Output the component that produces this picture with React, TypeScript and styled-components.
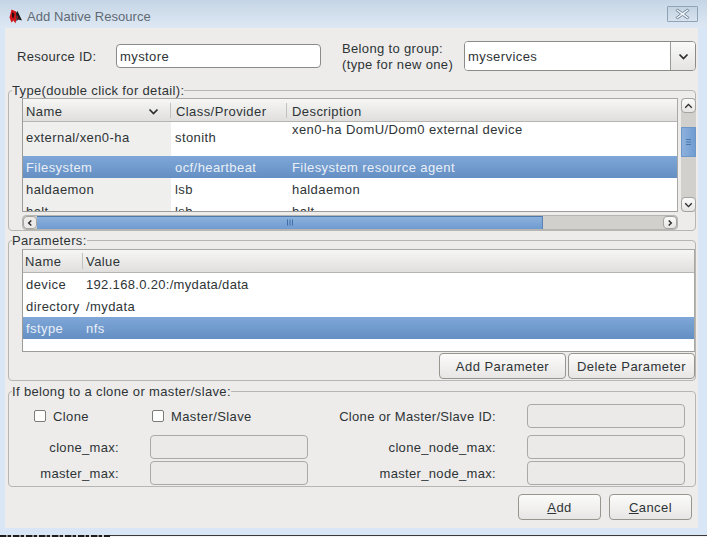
import React from "react";
import styled, { createGlobalStyle } from "styled-components";

const Global = createGlobalStyle`
  html, body { margin: 0; padding: 0; background: #d8e6f5; }
  body { font-family: "Liberation Sans", Arial, sans-serif; font-size: 13px; color: #2e3436; }
`;

const Win = styled.div`
  width: 707px; height: 537px; display: flex; flex-direction: column; overflow: hidden;
  background: #d8e6f5; position: relative;
`;
const TitleBar = styled.header`
  height: 28px; flex: none; display: flex; align-items: center; padding: 4px 9px 0 9px; box-sizing: border-box;
  background: linear-gradient(#c6d5e5, #dde8f3);
  color: #5f6a75; font-size: 13px; letter-spacing: 0.05px;
`;
const TitleText = styled.span` margin-left: 5px; flex: 1; `;
const CloseBtn = styled.button`
  width: 31px; height: 16px; padding: 0; margin-top: -4px; display: flex; align-items: center; justify-content: center;
  border: 1px solid #8ea3b6; border-radius: 1px; background: linear-gradient(#c4d3e2, #d7e2ed);
`;
const Panel = styled.main`
  width: 693px; height: 500px; flex: none; margin-left: 5px; box-sizing: border-box; padding: 0 2px 0 3px;
  background: #edeceb; display: flex; flex-direction: column;
`;
const TopRow = styled.div`
  display: flex; align-items: center; height: 30px; margin-top: 13px; flex: none; margin-bottom: 12px;
`;
const TopLabel = styled.label`
  width: 99px; margin-left: 9px; letter-spacing: 0.3px; color: #2e3436;
`;
const TextField = styled.input`
  width: 205px; height: 24px; box-sizing: border-box; border: 1px solid #8b8b88; border-radius: 4px;
  padding: 0 3px; font: inherit; letter-spacing: 0.42px; color: #2e3436; background: #fff; outline: none;
`;
const GroupLabel = styled.label`
  width: 122px; margin-left: 21px; padding-top: 1px; line-height: 16px; letter-spacing: 0.35px; color: #2e3436;
`;
const Combo = styled.div`
  width: 232px; height: 30px; box-sizing: border-box; border: 1px solid #8b8b88; border-radius: 4px; display: flex;
  overflow: hidden; background: #fff;
`;
const ComboInput = styled.input`
  flex: 1; min-width: 0; border: 0; padding: 0 3px; font: inherit; letter-spacing: 0.42px; color: #2e3436; outline: none;
`;
const ComboBtn = styled.div`
  width: 24px; display: flex; align-items: center; justify-content: center;
  border-left: 1px solid #9a9a97; background: linear-gradient(#fafafa, #e4e3e1);
`;
const Group = styled.fieldset`
  margin: 0; padding: 0; min-width: 0; box-sizing: border-box; border: 1px solid #b6b6b3; border-radius: 4px; flex: none;
`;
const Legend = styled.legend`
  padding: 0; margin-left: 3px; line-height: 15px; height: 15px; letter-spacing: 0.35px; color: #2e3436;
`;
const TypeGrid = styled.div`
  display: grid; grid-template-columns: 656px 15px; column-gap: 3px; row-gap: 3px;
  padding-left: 13px; grid-template-rows: 114px 15px;
`;
const Table = styled.div<{ $h: number }>`
  height: ${p => p.$h}px; box-sizing: border-box; overflow: hidden; background: #fff;
  border: 1px solid #9c9c99; border-top-color: #a8a8a5; border-right-color: #a8a8a5;
`;
const Head = styled.div<{ $cols: string; $pt?: number }>`
  display: grid; grid-template-columns: ${p => p.$cols}; height: 23px; box-sizing: border-box;
  padding-top: ${p => p.$pt ?? 0}px;
  background: linear-gradient(#f6f6f5, #e0dfdd); border-bottom: 1px solid #b5b5b2;
`;
const HeadCell = styled.div<{ $pl: number }>`
  display: flex; align-items: center; justify-content: space-between; padding: 1px 12px 0 ${p => p.$pl}px; letter-spacing: 0.42px;
  color: #2e3436; position: relative; box-sizing: border-box;
  &:not(:last-child)::after { content: ""; position: absolute; right: 0; top: 3px; bottom: 3px; width: 1px; background: #c2c2bf; }
`;
const Row = styled.div<{ $cols: string; $h: number; $sel?: boolean }>`
  display: grid; grid-template-columns: ${p => p.$cols}; height: ${p => p.$h}px; box-sizing: border-box;
  background: ${p => p.$sel ? "linear-gradient(#7fa7d8, #648fc3)" : "#fff"};
  color: ${p => p.$sel ? "#e9eff7" : "#2e3436"};
`;
const Cell = styled.div<{ $shade?: boolean; $top?: boolean; $pl?: number; $pb?: number }>`
  padding: 0 3px ${p => p.$pb ?? 0}px ${p => p.$pl ?? 3}px; display: flex; align-items: ${p => p.$top ? "flex-start" : "center"};
  letter-spacing: 0.42px; white-space: nowrap; overflow: hidden; line-height: 15px;
  background: ${p => p.$shade ? "#efefee" : "transparent"}; box-sizing: border-box;
`;
const IpCell = styled(Cell)` letter-spacing: 0.32px; `;
const ScrollV = styled.div`
  display: flex; flex-direction: column; background: #d1d0cd; border-radius: 4px; height: 114px;
`;
const ScrollH = styled.div`
  display: flex; background: #d1d0cd; border-radius: 4px; height: 15px; box-sizing: border-box; border: 1px solid #b5b5b2;
`;
const ArrowBtn = styled.div<{ $v?: boolean; $light?: boolean }>`
  flex: none; display: flex; align-items: center; justify-content: center; box-sizing: border-box;
  width: ${p => p.$v ? "15px" : "14px"}; height: ${p => p.$v ? "15px" : "13px"};
  border: 1px solid #a3a3a0; border-radius: 4px; background: ${p => p.$light ? "#ecebea" : "linear-gradient(#fbfbfb, #e6e5e3)"};
`;
const ThumbV = styled.div`
  width: 15px; height: 30px; margin-top: 14px; box-sizing: border-box; border: 1px solid #6d97c8; flex: none;
  background: linear-gradient(90deg, #8fb1dc, #6f9cd2); display: flex; align-items: center; justify-content: center;
`;
const ThumbH = styled.div`
  width: 506px; flex: none; box-sizing: border-box; border-right: 1px solid #5b82b3;
  background: linear-gradient(#8fb3de, #6f9bd0); display: flex; align-items: center; justify-content: center;
  box-shadow: inset 0 1px 0 #4f78ab;
`;
const Spacer = styled.div` flex: 1; `;
const Grip = styled.svg` display: block; `;
const ParamGroup = styled(Group)` margin-top: 2px; height: 148px; `;
const ParamBody = styled.div`
  padding: 1px 0 0 13px; display: flex; flex-direction: column;
`;
const ParamActions = styled.div`
  display: flex; justify-content: flex-end; gap: 2px; margin-top: 1px;
`;
const Btn = styled.button<{ $w: number; $h: number }>`
  width: ${p => p.$w}px; height: ${p => p.$h}px; box-sizing: border-box; padding: 0;
  border: 1px solid #96968f; border-radius: 4px; background: linear-gradient(#fbfbfa, #e7e6e4);
  font: inherit; letter-spacing: 0.45px; color: #2e3436;
`;
const CloneGroup = styled(Group)` margin-top: 3px; height: 103px; `;
const CloneGrid = styled.div`
  display: grid; grid-template-columns: 110px 158px 157px 158px; column-gap: 31px;
  grid-template-rows: 29px 24px 24px; row-gap: 2px; padding-top: 5px;
  & > :nth-child(-n + 4) { margin-bottom: 5px; height: 24px; }
`;
const CheckWrap = styled.label<{ $inset: number }>`
  display: flex; align-items: center; gap: 7px; padding-left: ${p => p.$inset}px; letter-spacing: 0.4px; white-space: nowrap;
`;
const Check = styled.input`
  appearance: none; width: 12px; height: 12px; margin: 0; flex: none; box-sizing: border-box;
  border: 1px solid #7b7b78; border-radius: 2px; background: #fff;
`;
const FieldLabel = styled.label`
  display: flex; align-items: center; justify-content: flex-end; letter-spacing: 0.32px; white-space: nowrap;
`;
const Disabled = styled.input`
  box-sizing: border-box; width: 158px; height: 24px; margin: 0; border: 1px solid #a9a9a6; border-radius: 4px; background: #ebeae9;
`;
const Footer = styled.div`
  display: flex; justify-content: flex-end; gap: 8px; padding-right: 4px; margin-top: 7px;
`;
const Strip = styled.div`
  position: absolute; left: 0; right: 0; bottom: 0; height: 2px; box-sizing: border-box;
  background: #f4f4f4; border-top: 1px solid #3a3a3a;
  &::before {
    content: ""; position: absolute; left: 0; top: -1px; width: 110px; height: 2px;
    background: repeating-linear-gradient(90deg, #1c1c1c 0 6px, #8a8a8a 6px 8px, #1c1c1c 8px 11px, #cfcfcf 11px 13px);
  }
`;

const typeCols = "148px 116px 1fr";
const paramCols = "60px 1fr";

const Chevron = ({ d, w = 11, h = 7 }: { d: "up" | "down" | "left" | "right"; w?: number; h?: number }) => {
  const paths = { up: "M1.5 5.5 L5.5 1.5 L9.5 5.5", down: "M1.5 1.5 L5.5 5.5 L9.5 1.5", left: "M5 1 L2 4 L5 7", right: "M2 1 L5 4 L2 7" };
  const vb = d === "up" || d === "down" ? "0 0 11 7" : "0 0 7 8";
  return (
    <svg width={w} height={h} viewBox={vb}>
      <path d={paths[d]} fill="none" stroke="#2b2b2b" strokeWidth="1.7" />
    </svg>
  );
};

export default function App() {
  return (
    <Win>
      <Global />
      <TitleBar>
        <svg width="13" height="15" viewBox="0 0 13 15">
          <path d="M2.5 0.5 L7 2.5 L7.5 9 L6.5 14.5 L4.5 11.5 L2.5 13.5 L0.5 8.5 Z" fill="#d0141c" />
          <path d="M7 4 L8.5 2 L13 11.5 L9 10.5 L7.5 12.5 Z" fill="#1a1a1a" />
          <path d="M3 3 L5.5 5 L4.5 9.5 L3 8 Z" fill="#2a0a0a" />
          <path d="M8 6 L9.5 9.5 L8 9.5 Z" fill="#c8121a" />
        </svg>
        <TitleText>Add Native Resource</TitleText>
        <CloseBtn aria-label="close">
          <svg width="15" height="12" viewBox="0 0 15 12">
            <path d="M2.5 1 L7.5 4.5 L12.5 1 L14 2.5 L9.5 6 L14 9.5 L12.5 11 L7.5 7.5 L2.5 11 L1 9.5 L5.5 6 L1 2.5 Z" fill="#eef3f8" stroke="#72879b" strokeWidth="1" />
          </svg>
        </CloseBtn>
      </TitleBar>
      <Panel>
        <TopRow>
          <TopLabel>Resource ID:</TopLabel>
          <TextField defaultValue="mystore" />
          <GroupLabel>Belong to group:<br />(type for new one)</GroupLabel>
          <Combo>
            <ComboInput defaultValue="myservices" />
            <ComboBtn><Chevron d="down" /></ComboBtn>
          </Combo>
        </TopRow>

        <Group>
          <Legend>Type(double click for detail):</Legend>
          <TypeGrid>
            <Table $h={114}>
              <Head $cols={typeCols} $pt={1}>
                <HeadCell $pl={3}>Name<Chevron d="down" /></HeadCell>
                <HeadCell $pl={5}>Class/Provider</HeadCell>
                <HeadCell $pl={5}>Description</HeadCell>
              </Head>
              <Row $cols={typeCols} $h={34}>
                <Cell $shade $pb={3}>external/xen0-ha</Cell>
                <Cell $pl={4} $pb={3}>stonith</Cell>
                <Cell $pl={5} $top>xen0-ha DomU/Dom0 external device</Cell>
              </Row>
              <Row $cols={typeCols} $h={22} $sel>
                <Cell>Filesystem</Cell>
                <Cell $pl={4}>ocf/heartbeat</Cell>
                <Cell $pl={5}>Filesystem resource agent</Cell>
              </Row>
              <Row $cols={typeCols} $h={22}>
                <Cell $shade>haldaemon</Cell>
                <Cell $pl={4}>lsb</Cell>
                <Cell $pl={5}>haldaemon</Cell>
              </Row>
              <Row $cols={typeCols} $h={22}>
                <Cell $shade>halt</Cell>
                <Cell $pl={4}>lsb</Cell>
                <Cell $pl={5}>halt</Cell>
              </Row>
            </Table>
            <ScrollV>
              <ArrowBtn $v><Chevron d="up" w={9} h={6} /></ArrowBtn>
              <ThumbV>
                <Grip width="7" height="8" viewBox="0 0 7 8"><path d="M1 1.5H6M1 4H6M1 6.5H6" stroke="#4d78ad" strokeWidth="1" /></Grip>
              </ThumbV>
              <Spacer />
              <ArrowBtn $v><Chevron d="down" w={9} h={6} /></ArrowBtn>
            </ScrollV>
            <ScrollH>
              <ArrowBtn $light><Chevron d="left" w={6} h={8} /></ArrowBtn>
              <ThumbH>
                <Grip width="8" height="7" viewBox="0 0 8 7"><path d="M1.5 0.5V6.5M4 0.5V6.5M6.5 0.5V6.5" stroke="#3f6da6" strokeWidth="1" /></Grip>
              </ThumbH>
              <Spacer />
              <ArrowBtn><Chevron d="right" w={6} h={8} /></ArrowBtn>
            </ScrollH>
          </TypeGrid>
        </Group>

        <ParamGroup>
          <Legend>Parameters:</Legend>
          <ParamBody>
            <Table $h={103}>
              <Head $cols={paramCols}>
                <HeadCell $pl={2}>Name</HeadCell>
                <HeadCell $pl={3}>Value</HeadCell>
              </Head>
              <Row $cols={paramCols} $h={22}>
                <Cell>device</Cell>
                <IpCell>192.168.0.20:/mydata/data</IpCell>
              </Row>
              <Row $cols={paramCols} $h={22}>
                <Cell>directory</Cell>
                <Cell>/mydata</Cell>
              </Row>
              <Row $cols={paramCols} $h={22} $sel>
                <Cell>fstype</Cell>
                <Cell>nfs</Cell>
              </Row>
            </Table>
            <ParamActions>
              <Btn $w={127} $h={26}>Add Parameter</Btn>
              <Btn $w={127} $h={26}>Delete Parameter</Btn>
            </ParamActions>
          </ParamBody>
        </ParamGroup>

        <CloneGroup>
          <Legend>If belong to a clone or master/slave:</Legend>
          <CloneGrid>
            <CheckWrap $inset={25}><Check type="checkbox" />Clone</CheckWrap>
            <CheckWrap $inset={2}><Check type="checkbox" />Master/Slave</CheckWrap>
            <FieldLabel>Clone or Master/Slave ID:</FieldLabel>
            <Disabled disabled />
            <FieldLabel>clone_max:</FieldLabel>
            <Disabled disabled />
            <FieldLabel>clone_node_max:</FieldLabel>
            <Disabled disabled />
            <FieldLabel>master_max:</FieldLabel>
            <Disabled disabled />
            <FieldLabel>master_node_max:</FieldLabel>
            <Disabled disabled />
          </CloneGrid>
        </CloneGroup>

        <Footer>
          <Btn $w={83} $h={26}><u>A</u>dd</Btn>
          <Btn $w={83} $h={26}><u>C</u>ancel</Btn>
        </Footer>
      </Panel>
      <Strip />
    </Win>
  );
}
